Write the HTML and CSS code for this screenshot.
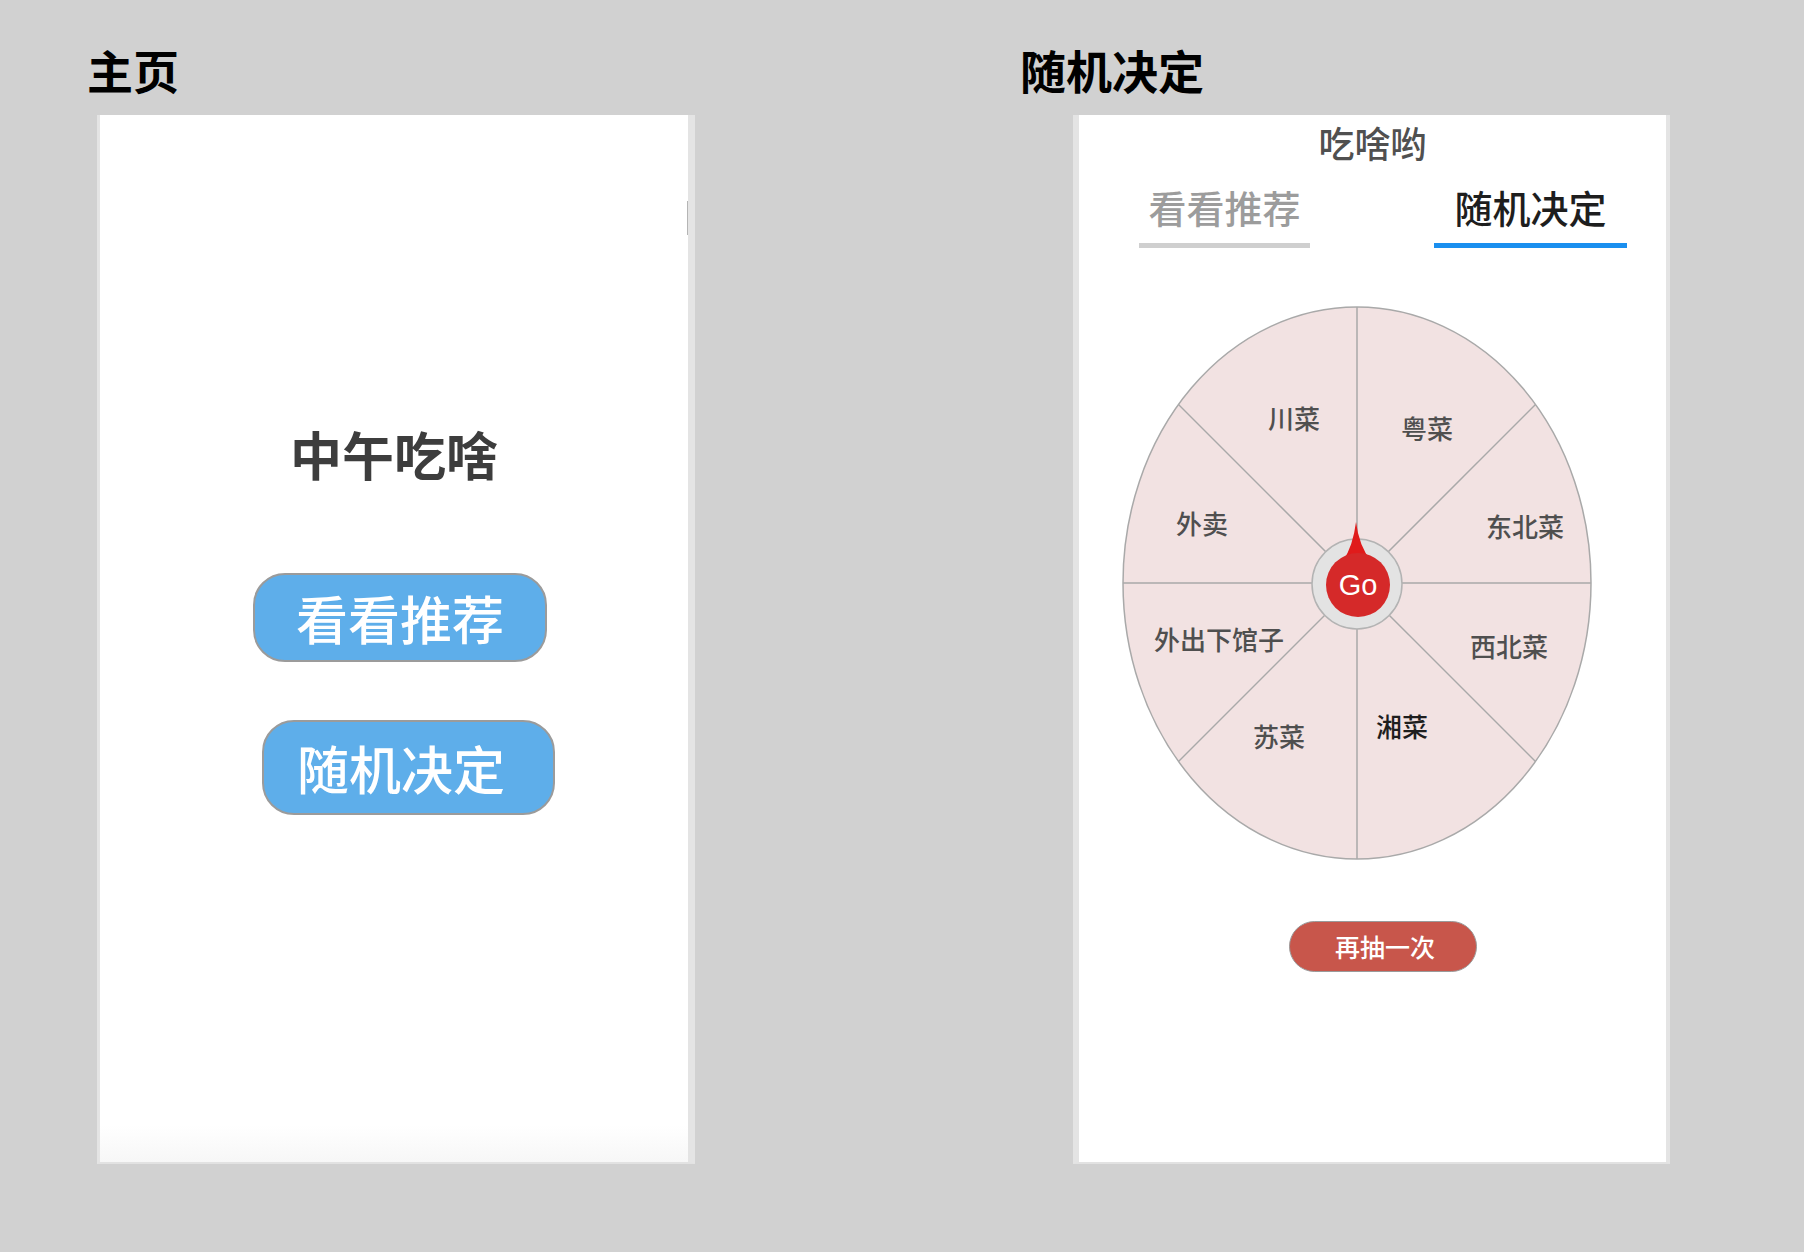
FILE: index.html
```html
<!DOCTYPE html>
<html lang="zh-CN">
<head>
    <meta charset="UTF-8">
    <meta name="viewport" content="width=device-width, initial-scale=1.0">
    <title>中午吃啥</title>
    <link rel="stylesheet" href="styles.css">
</head>
<body>
    <div class="board">
        <!-- home screen -->
        <section class="panel panel-home">
            <h2 class="panel-title">主页</h2>
            <div class="phone phone-home">
                <h1 class="home-title">中午吃啥</h1>
                <button class="home-btn btn-recommend">看看推荐</button>
                <button class="home-btn btn-random">随机决定</button>
            </div>
        </section>

        <!-- random pick screen -->
        <section class="panel panel-random">
            <h2 class="panel-title">随机决定</h2>
            <div class="phone phone-random">
                <div class="app-title">吃啥哟</div>
                <div class="tabs">
                    <div class="tab">看看推荐</div>
                    <div class="tab active">随机决定</div>
                </div>

                <svg class="wheel" width="480" height="564" viewBox="0 0 480 564">
                    <ellipse cx="240" cy="282" rx="234" ry="276" fill="#f2e2e2" stroke="#a9a9a9" stroke-width="1.5"/>
                    <g stroke="#a9a9a9" stroke-width="1.5">
                        <line x1="240" y1="6" x2="240" y2="558"/>
                        <line x1="6" y1="282" x2="474" y2="282"/>
                        <line x1="61.5" y1="103.5" x2="418.5" y2="460.5"/>
                        <line x1="418.5" y1="103.5" x2="61.5" y2="460.5"/>
                    </g>
                    <g class="slice-labels">
                        <text x="177" y="116">川菜</text>
                        <text x="310" y="126">粤菜</text>
                        <text x="85" y="221">外卖</text>
                        <text x="408" y="224">东北菜</text>
                        <text x="102" y="337">外出下馆子</text>
                        <text x="392" y="344">西北菜</text>
                        <text x="162" y="434">苏菜</text>
                        <text x="285" y="424" class="picked">湘菜</text>
                    </g>
                    <!-- go button with pointer -->
                    <circle cx="240" cy="283" r="45" fill="#e3e3e3" stroke="#b3b3b3" stroke-width="1.5"/>
                    <path d="M239 221 Q236 245 226 260 L254 260 Q242 245 239 221 Z" fill="#e01b1b"/>
                    <circle cx="241" cy="284" r="32" fill="#d52929"/>
                    <text x="241" y="294" class="go-label">Go</text>
                </svg>

                <button class="retry-btn">再抽一次</button>
            </div>
        </section>
    </div>
</body>
</html>
```

FILE: styles.css
```css
body {
    margin: 0;
    background: #d1d1d1;
    font-family: "Noto Sans CJK SC", "Noto Sans", sans-serif;
}
.board {
    display: flex;
    height: 1252px;
}
.panel-home {
    margin-left: 87px;
}
.panel-random {
    margin-left: 325px;
}
.panel-title {
    margin: 45px 0 22px;
    font-size: 46px;
    line-height: 48px;
    font-weight: 700;
    color: #000;
}

/* phone frames */
.phone {
    box-sizing: border-box;
    width: 598px;
    height: 1049px;
    background: #fff;
    border-bottom: 2px solid #e2e2e2;
    display: flex;
    flex-direction: column;
    align-items: flex-start;
}
.phone-home {
    position: relative;
    margin-left: 10px;
    border-left: 3px solid #e4e4e4;
    border-right: 7px solid #e4e4e4;
    padding-top: 313px;
    background: linear-gradient(to bottom, #fff 0, #fff 1010px, #f7f7f7 100%);
}
.phone-home::after {
    content: '';
    position: absolute;
    right: 0;
    top: 86px;
    width: 1px;
    height: 34px;
    background: #b5b5b5;
}
.phone-random {
    margin-left: 53px;
    width: 597px;
    border-left: 6px solid #e4e4e4;
    border-right: 4px solid #e4e4e4;
    padding-top: 9px;
}

/* home screen */
.home-title {
    width: 100%;
    margin: 0;
    text-align: center;
    font-size: 52px;
    line-height: 52px;
    font-weight: 700;
    color: #3d3d3d;
}
.home-btn {
    box-sizing: border-box;
    background: #5eaeea;
    border: 2px solid #9b9b9b;
    border-radius: 32px;
    color: #fff;
    font-family: inherit;
    font-size: 52px;
    line-height: 52px;
    font-weight: 500;
    padding: 0;
}
.btn-recommend {
    width: 294px;
    height: 89px;
    margin: 93px 0 0 153px;
}
.btn-random {
    width: 293px;
    height: 95px;
    margin: 58px 0 0 162px;
    padding-right: 15px;
}

/* random pick screen */
.app-title {
    width: 100%;
    text-align: center;
    font-size: 36px;
    line-height: 36px;
    font-weight: 500;
    color: #505050;
}
.tabs {
    display: flex;
    column-gap: 124px;
    margin-top: 28px;
    padding-left: 60px;
}
.tab {
    width: 171px;
    text-align: center;
    font-size: 38px;
    line-height: 38px;
    font-weight: 500;
    padding-bottom: 17px;
    color: #9c9c9c;
    border-bottom: 5px solid #cfcfcf;
}
.tab.active {
    width: 193px;
    color: #1e1e1e;
    border-bottom-color: #1a8fef;
}
.wheel {
    display: block;
    margin: 53px 0 0 38px;
}
.slice-labels text {
    font-family: "Noto Sans CJK SC", sans-serif;
    font-size: 26px;
    font-weight: 500;
    fill: #4f4f4f;
    text-anchor: middle;
    dominant-baseline: central;
}
.slice-labels text.picked {
    fill: #1e1e1e;
}
.go-label {
    font-family: "Liberation Sans", Arial, sans-serif;
    font-size: 29px;
    fill: #fff;
    text-anchor: middle;
}
.retry-btn {
    box-sizing: border-box;
    width: 188px;
    height: 51px;
    margin: 56px 0 0 210px;
    padding: 0 0 0 4px;
    background: #c8564b;
    border: 1px solid #9a9a9a;
    border-radius: 26px;
    color: #fff;
    font-family: inherit;
    font-size: 25px;
    line-height: 25px;
    font-weight: 500;
}
```
